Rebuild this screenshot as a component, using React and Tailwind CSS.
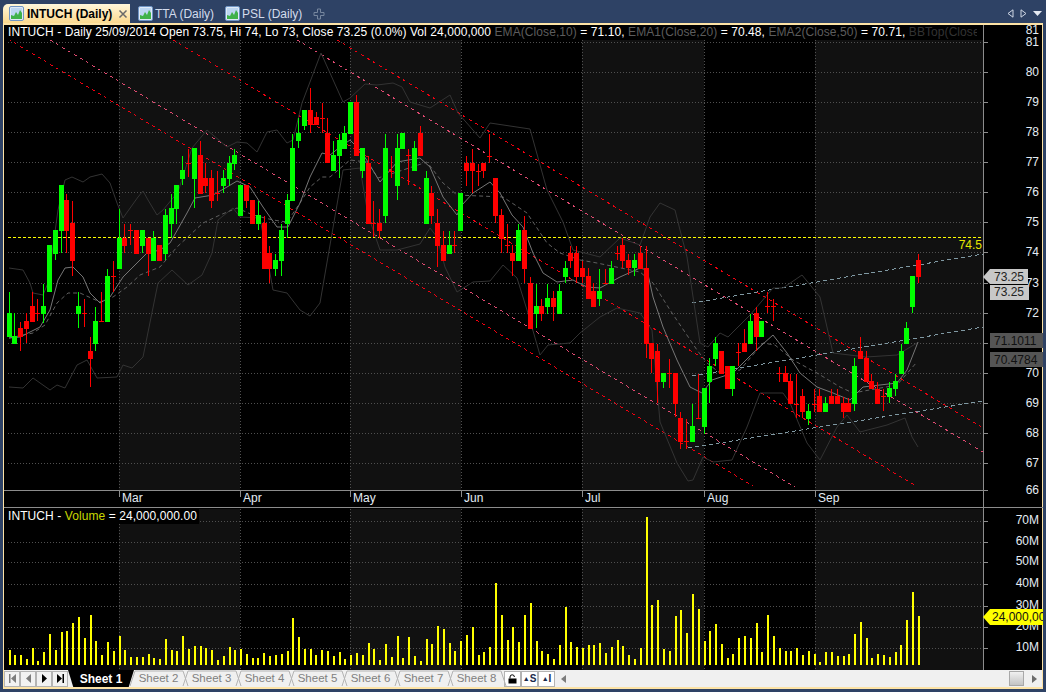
// INTUCH daily chart window: candles, trend channels and a volume pane
const FONT = "font-['Liberation_Sans',Arial,sans-serif]";
const SVG_FONT = '"Liberation Sans", Arial, sans-serif';

// rows were read off 3x crops, so every row is [crop x, crop y...] and gets scaled back here
const toCandles = (ox, oy, rows) =>
  rows.map(([tone, x, wickTop, bodyTop, bodyBottom, wickBottom]) => ({
    tone,
    x: Math.floor(ox + x / 3),
    wickTop: Math.round(oy + wickTop / 3),
    bodyTop: Math.round(oy + bodyTop / 3),
    bodyBottom: Math.round(oy + bodyBottom / 3),
    wickBottom: Math.round(oy + wickBottom / 3),
  }));

const toBars = (ox, oy, rows) =>
  rows.map(([x, top]) => ({ x: Math.round(ox + x / 3) - 1, top: Math.round(oy + top / 3) }));

const candles = [
  ...toCandles(0, 120, [
    ['g', 28, 516, 580, 650, 650], ['g', 43, 580, 648, 672, 672], ['r', 61, 606, 624, 652, 692],
    ['r', 79, 580, 603, 627, 670], ['r', 97, 516, 558, 606, 606], ['r', 112, 537, 580, 580, 602],
    ['g', 130, 492, 558, 582, 610], ['g', 148, 375, 375, 516, 516], ['g', 166, 330, 330, 402, 420],
    ['g', 184, 195, 195, 333, 400], ['r', 199, 222, 240, 333, 400], ['r', 217, 243, 309, 423, 468],
    ['g', 235, 516, 558, 582, 624], ['r', 253, 537, 580, 580, 622], ['r', 271, 652, 693, 717, 802],
    ['g', 286, 560, 603, 672, 692], ['r', 304, 516, 604, 604, 606], ['g', 322, 447, 468, 606, 606],
    ['r', 340, 423, 468, 468, 516], ['g', 358, 267, 353, 447, 447], ['r', 373, 311, 353, 378, 400],
    ['r', 391, 311, 330, 330, 375], ['r', 409, 330, 330, 402, 402], ['g', 427, 330, 330, 378, 400],
    ['r', 445, 353, 353, 402, 468], ['g', 460, 333, 353, 423, 423], ['r', 478, 375, 375, 423, 423],
    ['g', 496, 267, 285, 402, 420], ['g', 514, 222, 264, 312, 355], ['g', 529, 195, 195, 267, 312],
    ['g', 547, 108, 150, 178, 195], ['r', 565, 87, 130, 130, 172], ['g', 583, 84, 84, 178, 264],
    ['r', 601, 63, 105, 222, 222], ['r', 616, 130, 174, 198, 220], ['r', 634, 150, 174, 243, 264],
    ['r', 652, 153, 220, 220, 243], ['g', 670, 150, 174, 198, 220], ['g', 688, 108, 130, 178, 198],
    ['g', 703, 87, 105, 132, 150], ['g', 721, 195, 195, 288, 288], ['r', 739, 195, 195, 243, 264],
    ['r', 757, 240, 240, 312, 312], ['g', 775, 243, 285, 312, 330], ['r', 793, 288, 309, 447, 447],
    ['r', 808, 378, 400, 447, 489], ['g', 826, 402, 420, 447, 468], ['g', 844, 312, 330, 423, 468],
    ['g', 862, 222, 240, 312, 355], ['g', 877, 42, 84, 243, 243],
  ]),
  ...toCandles(0, 0, [
    ['g', 894, 354, 399, 423, 444], ['g', 912, 330, 330, 378, 390], ['r', 930, 264, 330, 375, 399],
    ['r', 948, 336, 351, 375, 375], ['r', 966, 309, 354, 354, 399], ['r', 981, 354, 399, 489, 489],
  ]),
  ...toCandles(330, 90, [
    ['g', 10, 153, 195, 243, 243], ['g', 28, 132, 150, 198, 264], ['g', 43, 108, 130, 178, 178],
    ['g', 61, 36, 36, 132, 132], ['r', 79, 15, 36, 198, 198], ['g', 97, 174, 175, 243, 264],
    ['r', 115, 198, 220, 402, 402], ['r', 130, 333, 400, 400, 440], ['r', 148, 357, 400, 423, 443],
    ['g', 166, 132, 174, 378, 400], ['r', 184, 198, 243, 243, 264], ['g', 202, 132, 174, 288, 330],
    ['g', 217, 130, 130, 178, 178], ['r', 235, 178, 195, 195, 285], ['g', 253, 153, 174, 243, 243],
    ['r', 271, 108, 130, 198, 198], ['g', 289, 243, 264, 402, 402], ['r', 304, 288, 309, 378, 402],
    ['r', 322, 357, 400, 468, 532], ['r', 340, 423, 465, 513, 513], ['g', 358, 423, 465, 492, 492],
    ['r', 373, 423, 465, 465, 490], ['g', 391, 309, 309, 423, 423], ['r', 409, 198, 220, 243, 288],
    ['r', 427, 178, 220, 243, 310], ['r', 445, 222, 243, 243, 288], ['r', 460, 220, 220, 243, 264],
    ['r', 478, 132, 198, 198, 220], ['r', 496, 264, 264, 378, 400], ['r', 514, 357, 375, 447, 490],
    ['r', 532, 402, 465, 465, 490], ['r', 547, 465, 490, 513, 558], ['g', 565, 402, 420, 513, 513],
    ['r', 583, 378, 420, 537, 580], ['r', 601, 562, 580, 718, 718], ['g', 619, 582, 648, 672, 714],
    ['r', 634, 628, 648, 672, 692], ['g', 652, 582, 624, 650, 672], ['r', 670, 602, 624, 650, 692],
    ['g', 688, 582, 603, 672, 672], ['g', 706, 513, 534, 560, 578], ['r', 721, 468, 490, 513, 534],
    ['r', 739, 468, 490, 560, 580], ['r', 757, 513, 534, 560, 580], ['r', 775, 535, 558, 627, 627],
    ['r', 790, 580, 603, 650, 650], ['g', 808, 537, 603, 627, 648], ['r', 826, 537, 580, 580, 580],
    ['g', 844, 514, 534, 582, 582], ['r', 862, 468, 490, 490, 510],
  ]),
  ...toCandles(620, 230, [
    ['r', 7, 24, 45, 93, 114], ['r', 25, 72, 90, 115, 135], ['g', 43, 72, 90, 115, 138],
    ['r', 61, 48, 70, 117, 117], ['r', 79, 48, 114, 342, 385], ['r', 94, 342, 340, 387, 430],
    ['r', 112, 342, 363, 456, 520], ['g', 130, 430, 430, 456, 475], ['r', 148, 387, 430, 430, 475],
    ['r', 166, 430, 430, 522, 562], ['r', 181, 546, 564, 636, 657], ['r', 199, 567, 633, 633, 657],
    ['g', 217, 522, 588, 636, 636], ['r', 235, 432, 565, 565, 567], ['g', 253, 474, 474, 591, 612],
    ['g', 268, 385, 408, 456, 518], ['g', 286, 321, 340, 387, 408], ['r', 304, 363, 363, 432, 432],
    ['r', 322, 408, 408, 477, 477], ['g', 337, 408, 408, 477, 498], ['r', 355, 340, 365, 365, 408],
    ['r', 373, 297, 340, 365, 365], ['g', 391, 252, 273, 342, 342], ['r', 409, 232, 250, 321, 362],
    ['g', 424, 273, 273, 321, 321], ['r', 442, 186, 228, 228, 250], ['r', 460, 207, 228, 228, 273],
    ['r', 478, 411, 430, 430, 455], ['r', 496, 408, 430, 456, 456], ['r', 511, 432, 453, 522, 522],
    ['r', 529, 432, 522, 522, 564], ['r', 547, 477, 498, 546, 564], ['g', 565, 522, 543, 567, 585],
    ['r', 583, 477, 522, 522, 546], ['r', 598, 477, 498, 546, 546], ['g', 616, 502, 519, 546, 546],
    ['r', 634, 477, 498, 522, 522], ['r', 652, 477, 498, 522, 522], ['r', 670, 500, 520, 546, 564],
    ['r', 685, 503, 520, 546, 546], ['g', 703, 385, 408, 522, 544], ['r', 721, 321, 363, 387, 387],
    ['r', 739, 363, 385, 456, 456], ['r', 754, 432, 453, 477, 477], ['r', 772, 457, 477, 522, 522],
    ['r', 790, 477, 498, 498, 543], ['g', 808, 457, 475, 500, 520], ['g', 826, 432, 453, 477, 498],
    ['g', 844, 342, 363, 432, 432], ['g', 859, 276, 294, 342, 342], ['g', 877, 138, 138, 232, 250],
    ['r', 895, 72, 90, 140, 159],
  ]),
];

const volumes = [
  ...toBars(0, 480, [
    [30, 510], [45, 525], [62, 525], [81, 537], [99, 504], [114, 543], [132, 516], [150, 462], [168, 510], [186, 456],
    [201, 453], [219, 429], [237, 411], [255, 474], [273, 405], [288, 483], [306, 525], [324, 486], [342, 513], [360, 468],
    [375, 510], [393, 531], [411, 531], [429, 531], [447, 522], [462, 534], [480, 537], [498, 477], [516, 510], [531, 513],
    [549, 468], [567, 507], [585, 498], [603, 498], [618, 504], [636, 510], [654, 540], [672, 528], [690, 501], [705, 510],
    [723, 507], [741, 522], [759, 534], [774, 534], [792, 519], [810, 528], [828, 525], [846, 522], [864, 513], [879, 414],
    [897, 471], [915, 507], [933, 507], [948, 525], [966, 510], [984, 513], [1002, 528], [1020, 516], [1035, 537],
  ]),
  ...toBars(350, 600, [
    [3, 165], [21, 159], [39, 165], [57, 129], [72, 147], [90, 180], [108, 132], [126, 171], [144, 108], [159, 174],
    [177, 111], [195, 168], [213, 183], [231, 117], [246, 132], [264, 78], [282, 87], [300, 129], [315, 153], [333, 123],
    [351, 105], [369, 81], [387, 165], [402, 156], [420, 141], [438, -51], [456, 45], [474, 120], [489, 81], [507, 126],
    [525, 45], [543, 9], [561, 123], [576, 153], [594, 162], [612, 177], [630, 135], [648, 21], [663, 126], [681, 141],
    [699, 144], [717, 135], [732, 135], [750, 129], [768, 159], [786, 141], [804, 120], [819, 138], [837, 165], [855, 177],
  ]),
  ...toBars(640, 510, [
    [3, 414], [21, 21], [36, 285], [54, 270], [72, 417], [90, 423], [108, 318], [123, 300], [141, 369], [159, 252],
    [177, 297], [195, 393], [210, 363], [228, 342], [246, 402], [264, 444], [279, 432], [297, 384], [315, 378], [333, 384],
    [351, 339], [366, 426], [384, 315], [402, 378], [420, 414], [438, 423], [453, 423], [471, 414], [489, 435], [507, 423],
    [525, 432], [540, 456],
  ]),
  ...toBars(800, 480, [
    [78, 516], [96, 516], [114, 528], [132, 528], [147, 522], [165, 462], [183, 426], [201, 474], [216, 534], [234, 522],
    [252, 525], [270, 531], [288, 516], [303, 495], [321, 420], [339, 336], [357, 408],
  ]),
];

const BB_TOP = '9,268 23,270 30,283 33,293 43,295 48,283 58,210 65,180 72,177 83,182 90,177 102,174 110,183 117,203 123,218 138,197 143,191 148,200 157,215 163,210 178,192 192,148 207,130 227,147 237,142 247,143 257,152 267,132 277,130 287,143 293,140 302,103 321,53 343,102 350,98 365,84 377,85 393,83 402,87 410,102 430,108 450,95 458,113 480,138 490,123 530,129 547,190 563,222 573,250 600,257 620,238 640,245 650,217 660,203 675,210 680,230 687,257 700,343 708,347 720,333 728,337 750,315 773,288 783,288 802,275 820,297 833,353 866,357 897,355 917,343';
const BB_BOTTOM = '9,387 23,388 33,378 50,390 57,385 65,388 77,365 87,360 97,378 117,377 123,365 132,368 143,357 158,283 172,270 188,285 202,275 212,253 218,220 233,208 240,217 260,218 273,290 287,293 300,310 310,316 320,303 330,245 343,170 360,168 368,215 380,250 397,250 420,244 430,228 437,237 445,267 457,292 473,282 490,281 503,265 517,278 527,310 540,355 548,345 570,343 580,333 600,317 617,308 640,313 652,330 660,422 677,463 688,481 693,480 703,457 713,462 732,460 747,427 760,393 783,393 790,403 807,443 820,460 837,427 847,415 860,432 887,425 905,418 912,437 918,447';
const EMA_FAST = '9,338 20,337 40,327 50,310 58,280 65,268 73,267 83,277 90,293 100,303 110,297 123,277 137,263 147,253 160,250 170,243 187,213 195,198 213,195 227,187 237,181 250,187 263,207 277,227 288,227 300,203 310,177 322,153 330,155 340,147 350,140 360,150 368,162 380,182 397,162 420,158 430,167 443,197 457,215 462,205 473,193 490,182 500,193 512,215 523,227 533,253 543,273 557,282 573,280 587,287 600,288 620,277 640,268 647,270 653,297 663,327 677,360 690,387 702,393 712,380 733,373 753,353 773,335 787,353 800,373 817,387 833,393 850,400 863,387 897,383 907,370 918,342';
const EMA_SLOW = '9,338 33,333 45,325 57,303 68,293 80,293 100,302 113,297 127,287 140,275 160,267 177,247 190,235 203,223 220,215 237,208 253,215 273,220 287,222 300,203 310,187 322,177 330,177 350,160 367,162 378,178 397,172 427,162 443,183 457,195 503,197 527,213 547,243 560,253 580,260 597,263 640,272 653,283 670,310 697,350 707,363 720,373 740,370 763,343 775,345 793,360 817,373 840,387 853,393 897,385 917,362';

// slope .6 channel lines, [x1, y1, x2, y2]
const RED_LINES = [[8, 39, 753, 486], [173, 40, 916, 486], [337, 40, 983, 428]];
const PINK_LINES = [[50, 40, 795, 487], [297, 40, 983, 452]];
const STEEL_LINES = [[692, 303, 983, 254], [692, 376, 983, 327], [688, 448, 983, 401]];

const MONTHS = [
  ['Mar', 119], ['Apr', 240], ['May', 350], ['Jun', 461], ['Jul', 582], ['Aug', 704], ['Sep', 815],
];
const BANDS = [[119, 240], [350, 461], [582, 704], [815, 983]];
const PRICES = [
  [81, 42], [80, 72], [79, 102], [78, 132], [77, 162], [76, 192], [75, 222], [74, 252], [73, 283],
  [72, 313], [71, 343], [70, 373], [69, 403], [68, 433], [67, 463], [66, 490],
];
const VOLUME_TICKS = [['70M', 521], ['60M', 542], ['50M', 562], ['40M', 584], ['30M', 606], ['20M', 627], ['10M', 648]];
const SHEETS = ['Sheet 2', 'Sheet 3', 'Sheet 4', 'Sheet 5', 'Sheet 6', 'Sheet 7', 'Sheet 8'];

function AxisText({ x, y, children, anchor = 'end', fill = '#e4ecf4' }) {
  return (
    <text x={x} y={y} textAnchor={anchor} fill={fill} fontSize="12" fontFamily={SVG_FONT}>
      {children}
    </text>
  );
}

function Candle({ tone, x, wickTop, bodyTop, bodyBottom, wickBottom }) {
  const fill = tone === 'g' ? '#00ff00' : '#ff0000';
  return (
    <g fill={fill}>
      <rect x={x} y={wickTop} width="1" height={Math.max(wickBottom - wickTop, 1)} />
      <rect x={x - 2} y={bodyTop} width="5" height={Math.max(bodyBottom - bodyTop, 1)} />
    </g>
  );
}

function GridLines({ top, bottom, rows }) {
  return (
    <g stroke="#505050" strokeDasharray="1 2" shapeRendering="crispEdges">
      {rows.map(y => <line key={y} x1="8" y1={y + 0.5} x2="983" y2={y + 0.5} />)}
      {MONTHS.map(([name, x]) => <line key={name} x1={x + 0.5} y1={top} x2={x + 0.5} y2={bottom} />)}
    </g>
  );
}

function PricePane() {
  return (
    <div className="relative h-[465px]">
      <svg width="1039" height="465" viewBox="4 25 1039 465" className="block overflow-visible">
        {BANDS.map(([a, b]) => <rect key={a} x={a} y="40" width={b - a} height="450" fill="#111111" />)}
        <GridLines top={40} bottom={490} rows={PRICES.slice(0, -1).map(p => p[1])} />

        <line x1="8" y1="237.5" x2="983" y2="237.5" stroke="#ffff00" strokeDasharray="3 2" shapeRendering="crispEdges" />

        <g strokeDasharray="3 4" fill="none" shapeRendering="crispEdges">
          {RED_LINES.map(l => <line key={l[0]} x1={l[0]} y1={l[1]} x2={l[2]} y2={l[3]} stroke="#f00010" />)}
          {PINK_LINES.map(l => <line key={l[0]} x1={l[0]} y1={l[1]} x2={l[2]} y2={l[3]} stroke="#e04a70" />)}
        </g>
        <g strokeDasharray="4 3" fill="none" stroke="#7f98a2" shapeRendering="crispEdges">
          {STEEL_LINES.map(l => <line key={l[1]} x1={l[0]} y1={l[1]} x2={l[2]} y2={l[3]} />)}
        </g>

        <polyline points={BB_TOP} fill="none" stroke="#333333" />
        <polyline points={BB_BOTTOM} fill="none" stroke="#333333" />
        <polyline points={EMA_SLOW} fill="none" stroke="#606060" strokeDasharray="4 3" />
        <polyline points={EMA_FAST} fill="none" stroke="#767676" />

        <g shapeRendering="crispEdges">
          {candles.map((c, i) => <Candle key={i} {...c} />)}
        </g>

        <line x1="983.5" y1="25" x2="983.5" y2="490" stroke="#8c8c8c" shapeRendering="crispEdges" />
        <g stroke="#8c8c8c" shapeRendering="crispEdges">
          {PRICES.slice(0, -1).map(([, y]) => <line key={y} x1="983" y1={y + 0.5} x2="988" y2={y + 0.5} />)}
        </g>
        <AxisText x={1039} y={34}>81</AxisText>
        {PRICES.map(([price, y]) => (
          <AxisText key={price} x={1039} y={price === 66 ? 494 : y + 4}>{price}</AxisText>
        ))}

        <AxisText x={982} y={249} fill="#e6e600">74.5</AxisText>

        <polygon points="983,277 990,269 1028,269 1028,284 990,284" fill="#c8c8c8" />
        <rect x="990" y="285" width="39" height="15" fill="#c8c8c8" />
        <AxisText x={994} y={281} anchor="start" fill="#222222">73.25</AxisText>
        <AxisText x={994} y={296} anchor="start" fill="#222222">73.25</AxisText>
        <rect x="990" y="333" width="53" height="15" fill="#555555" />
        <AxisText x={994} y={345} anchor="start" fill="#111111">71.1011</AxisText>
        <rect x="990" y="352" width="53" height="15" fill="#555555" />
        <AxisText x={994} y={364} anchor="start" fill="#111111">70.4784</AxisText>
      </svg>

      <div className={`absolute left-0 top-0 w-[973px] h-[15px] overflow-hidden bg-black whitespace-nowrap pl-1 text-[12px] tracking-[0.08px] leading-[15px] text-white ${FONT}`}>
        INTUCH - Daily 25/09/2014 Open 73.75, Hi 74, Lo 73, Close 73.25 (0.0%) Vol 24,000,000{' '}
        <span className="text-[#5c5c5c]">EMA(Close,10)</span> = 71.10,{' '}
        <span className="text-[#5c5c5c]">EMA1(Close,20)</span> = 70.48,{' '}
        <span className="text-[#5c5c5c]">EMA2(Close,50)</span> = 70.71,{' '}
        <span className="text-[#333333]">BBTop(Close,15,2) = 74.70</span>
      </div>
    </div>
  );
}

function TimeAxis() {
  return (
    <svg width="1039" height="17" viewBox="4 490 1039 17" className="block">
      <g stroke="#8c8c8c" shapeRendering="crispEdges">
        <line x1="4" y1="490.5" x2="988" y2="490.5" />
        <line x1="983.5" y1="490" x2="983.5" y2="507" />
        {MONTHS.map(([name, x]) => <line key={name} x1={x + 0.5} y1="490" x2={x + 0.5} y2="497" />)}
      </g>
      {MONTHS.map(([name, x]) => (
        <AxisText key={name} x={x + 3} y={502} anchor="start">{name}</AxisText>
      ))}
    </svg>
  );
}

function VolumePane() {
  return (
    <div className="relative h-[163px]">
      <svg width="1039" height="163" viewBox="4 507 1039 163" className="block">
        <line x1="4" y1="507.5" x2="1043" y2="507.5" stroke="#8c8c8c" shapeRendering="crispEdges" />
        {BANDS.map(([a, b]) => <rect key={a} x={a} y="509" width={b - a} height="161" fill="#111111" />)}
        <GridLines top={509} bottom={670} rows={VOLUME_TICKS.map(t => t[1])} />
        <g fill="#ffff00" shapeRendering="crispEdges">
          {volumes.map((b, i) => <rect key={i} x={b.x} y={b.top} width="2" height={665 - b.top} />)}
        </g>
        <line x1="983.5" y1="507" x2="983.5" y2="670" stroke="#8c8c8c" shapeRendering="crispEdges" />
        <g stroke="#8c8c8c" shapeRendering="crispEdges">
          {VOLUME_TICKS.map(([label, y]) => <line key={label} x1="983" y1={y + 0.5} x2="988" y2={y + 0.5} />)}
        </g>
        {VOLUME_TICKS.map(([label, y]) => <AxisText key={label} x={1039} y={y + 3}>{label}</AxisText>)}
        <polygon points="983,617 990,609 1043,609 1043,625 990,625" fill="#ffff00" />
        <AxisText x={992} y={621} anchor="start" fill="#111111">24,000,000</AxisText>
      </svg>

      <div className={`absolute left-0 top-[2px] w-[195px] h-[15px] bg-black pl-1 whitespace-nowrap text-[12px] tracking-[0.08px] leading-[15px] text-white ${FONT}`}>
        INTUCH - <span className="text-[#c8d800]">Volume</span> = 24,000,000.00
      </div>
    </div>
  );
}

function TabIcon() {
  return (
    <svg width="15" height="15" viewBox="0 0 15 15" className="shrink-0">
      <rect x="0.5" y="0.5" width="14" height="14" rx="1.5" fill="#dfeaf8" stroke="#6f94c4" />
      <rect x="2" y="2" width="11" height="11" fill="#bcd6f2" />
      <polygon points="2,13 2,9 5,10 7,6 9,9 11,4 13,7 13,13" fill="#3fb24a" />
    </svg>
  );
}

function Tab({ label, active }) {
  if (active) {
    return (
      <div className="flex shrink-0 items-center h-[19px] w-[127px] pl-[6px] rounded-tl-[5px] bg-gradient-to-b from-[#fff6da] to-[#fbd98e]">
        <TabIcon />
        <span className="ml-[3px] whitespace-nowrap text-[12px] font-bold text-black">{label}</span>
        <svg width="10" height="10" viewBox="0 0 10 10" className="ml-[6px] shrink-0">
          <path d="M1.5 1.5l7 7M8.5 1.5l-7 7" stroke="#6a6a6a" strokeWidth="1.5" />
        </svg>
      </div>
    );
  }
  return (
    <div className="flex items-center gap-[2px] h-[19px]">
      <TabIcon />
      <span className="whitespace-nowrap text-[12px] text-[#d3dcec]">{label}</span>
    </div>
  );
}

function NavButton({ dim, children }) {
  return (
    <div className={`flex h-[16px] w-[16px] items-center justify-center border border-[#b4b4b4] bg-[#f2f2f2] ${dim ? 'text-[#7c7c7c]' : 'text-black'}`}>
      <svg width="9" height="9" viewBox="0 0 9 9" fill="currentColor">{children}</svg>
    </div>
  );
}

function SheetTab({ label }) {
  return (
    <div className="relative w-[53px] h-[17px] flex items-center justify-center text-[11.5px] text-[#808080]">
      <svg width="60" height="17" viewBox="0 0 60 17" className="absolute left-[-3px] top-0">
        <path d="M1 16L6 1H54L59 16" fill="none" stroke="#b4b4b4" />
      </svg>
      <span className="relative">{label}</span>
    </div>
  );
}

function SheetBar() {
  return (
    <div className={`flex items-center h-[17px] bg-[#f0f0f0] ${FONT}`}>
      <div className="flex items-center">
        <NavButton dim><path d="M1 0h1.5v9H1zM8 0v9L3 4.5z" /></NavButton>
        <NavButton dim><path d="M7 0v9L2 4.5z" /></NavButton>
        <NavButton><path d="M2 0v9l5-4.5z" /></NavButton>
        <NavButton><path d="M1 0v9l5-4.5zM6.5 0H8v9H6.5z" /></NavButton>
      </div>

      <div className="flex h-[17px] w-[66px] items-center justify-center bg-black text-[12px] font-bold text-white [clip-path:polygon(0_0,100%_0,92%_100%,8%_100%)]">
        Sheet 1
      </div>
      <div className="flex ml-[-2px]">
        {SHEETS.map(name => <SheetTab key={name} label={name} />)}
      </div>

      <div className="flex items-center ml-[1px]">
        <div className="flex h-[16px] w-[17px] items-center justify-center border border-[#b4b4b4] bg-white">
          <svg width="9" height="10" viewBox="0 0 9 10">
            <rect x="0.5" y="4.5" width="8" height="5" fill="#000" />
            <path d="M2 4.5V3a2.2 2.2 0 0 1 4.4 0" fill="none" stroke="#000" />
          </svg>
        </div>
        <div className="flex h-[16px] w-[17px] items-center justify-center border border-[#b4b4b4] bg-white text-[10px] font-bold leading-none text-[#1a2a4a]">
          <span className="text-[7px]">▲</span>S
        </div>
        <div className="flex h-[16px] w-[17px] items-center justify-center border border-[#b4b4b4] bg-white text-[10px] font-bold leading-none text-[#1a2a4a]">
          <span className="text-[7px]">▲</span>I
        </div>
      </div>

      <svg width="6" height="8" viewBox="0 0 6 8" className="ml-[6px] text-[#7c7c7c]">
        <path d="M5 0v8L0 4z" fill="currentColor" />
      </svg>
      <div className="flex-1" />
      <div className="h-[15px] w-[15px] border border-[#a8a8a8] bg-gradient-to-b from-[#f0f0f0] to-[#c4c4c4]" />
      <svg width="6" height="8" viewBox="0 0 6 8" className="ml-[7px] mr-[5px] text-[#6c6c6c]">
        <path d="M1 0v8l5-4z" fill="currentColor" />
      </svg>
    </div>
  );
}

export default function App() {
  return (
    <div className={`flex flex-col w-[1046px] h-[692px] overflow-hidden bg-[#2e4265] ${FONT}`}>
      {/* tab strip */}
      <div className="flex items-end h-[23px] pl-[3px] pr-[3px]">
        <Tab label="INTUCH (Daily)" active />
        <div className="ml-[8px]"><Tab label="TTA (Daily)" /></div>
        <div className="ml-[11px]"><Tab label="PSL (Daily)" /></div>
        <svg width="12" height="12" viewBox="0 0 12 12" className="ml-[11px] mb-[3px]">
          <path d="M4.5 1h3v3.5H11v3H7.5V11h-3V7.5H1v-3h3.5z" fill="none" stroke="#76869e" />
        </svg>
        <div className="flex-1" />
        <div className="flex items-center gap-[6px] mb-[5px] pr-[1px]">
          <svg width="7" height="9" viewBox="0 0 7 9"><path d="M6 .8v7.4L1 4.5z" fill="none" stroke="#d0d8e6" /></svg>
          <svg width="7" height="9" viewBox="0 0 7 9"><path d="M1 .8v7.4L6 4.5z" fill="none" stroke="#d0d8e6" /></svg>
          <svg width="9" height="6" viewBox="0 0 9 6"><path d="M0 0h9L4.5 5z" fill="#e4e9f2" /></svg>
        </div>
      </div>

      {/* chart frame */}
      <div className="mx-[3px] border-x border-t-2 border-b-2 border-[#fde3a6] bg-black">
        <PricePane />
        <TimeAxis />
        <VolumePane />
        <SheetBar />
      </div>
    </div>
  );
}
